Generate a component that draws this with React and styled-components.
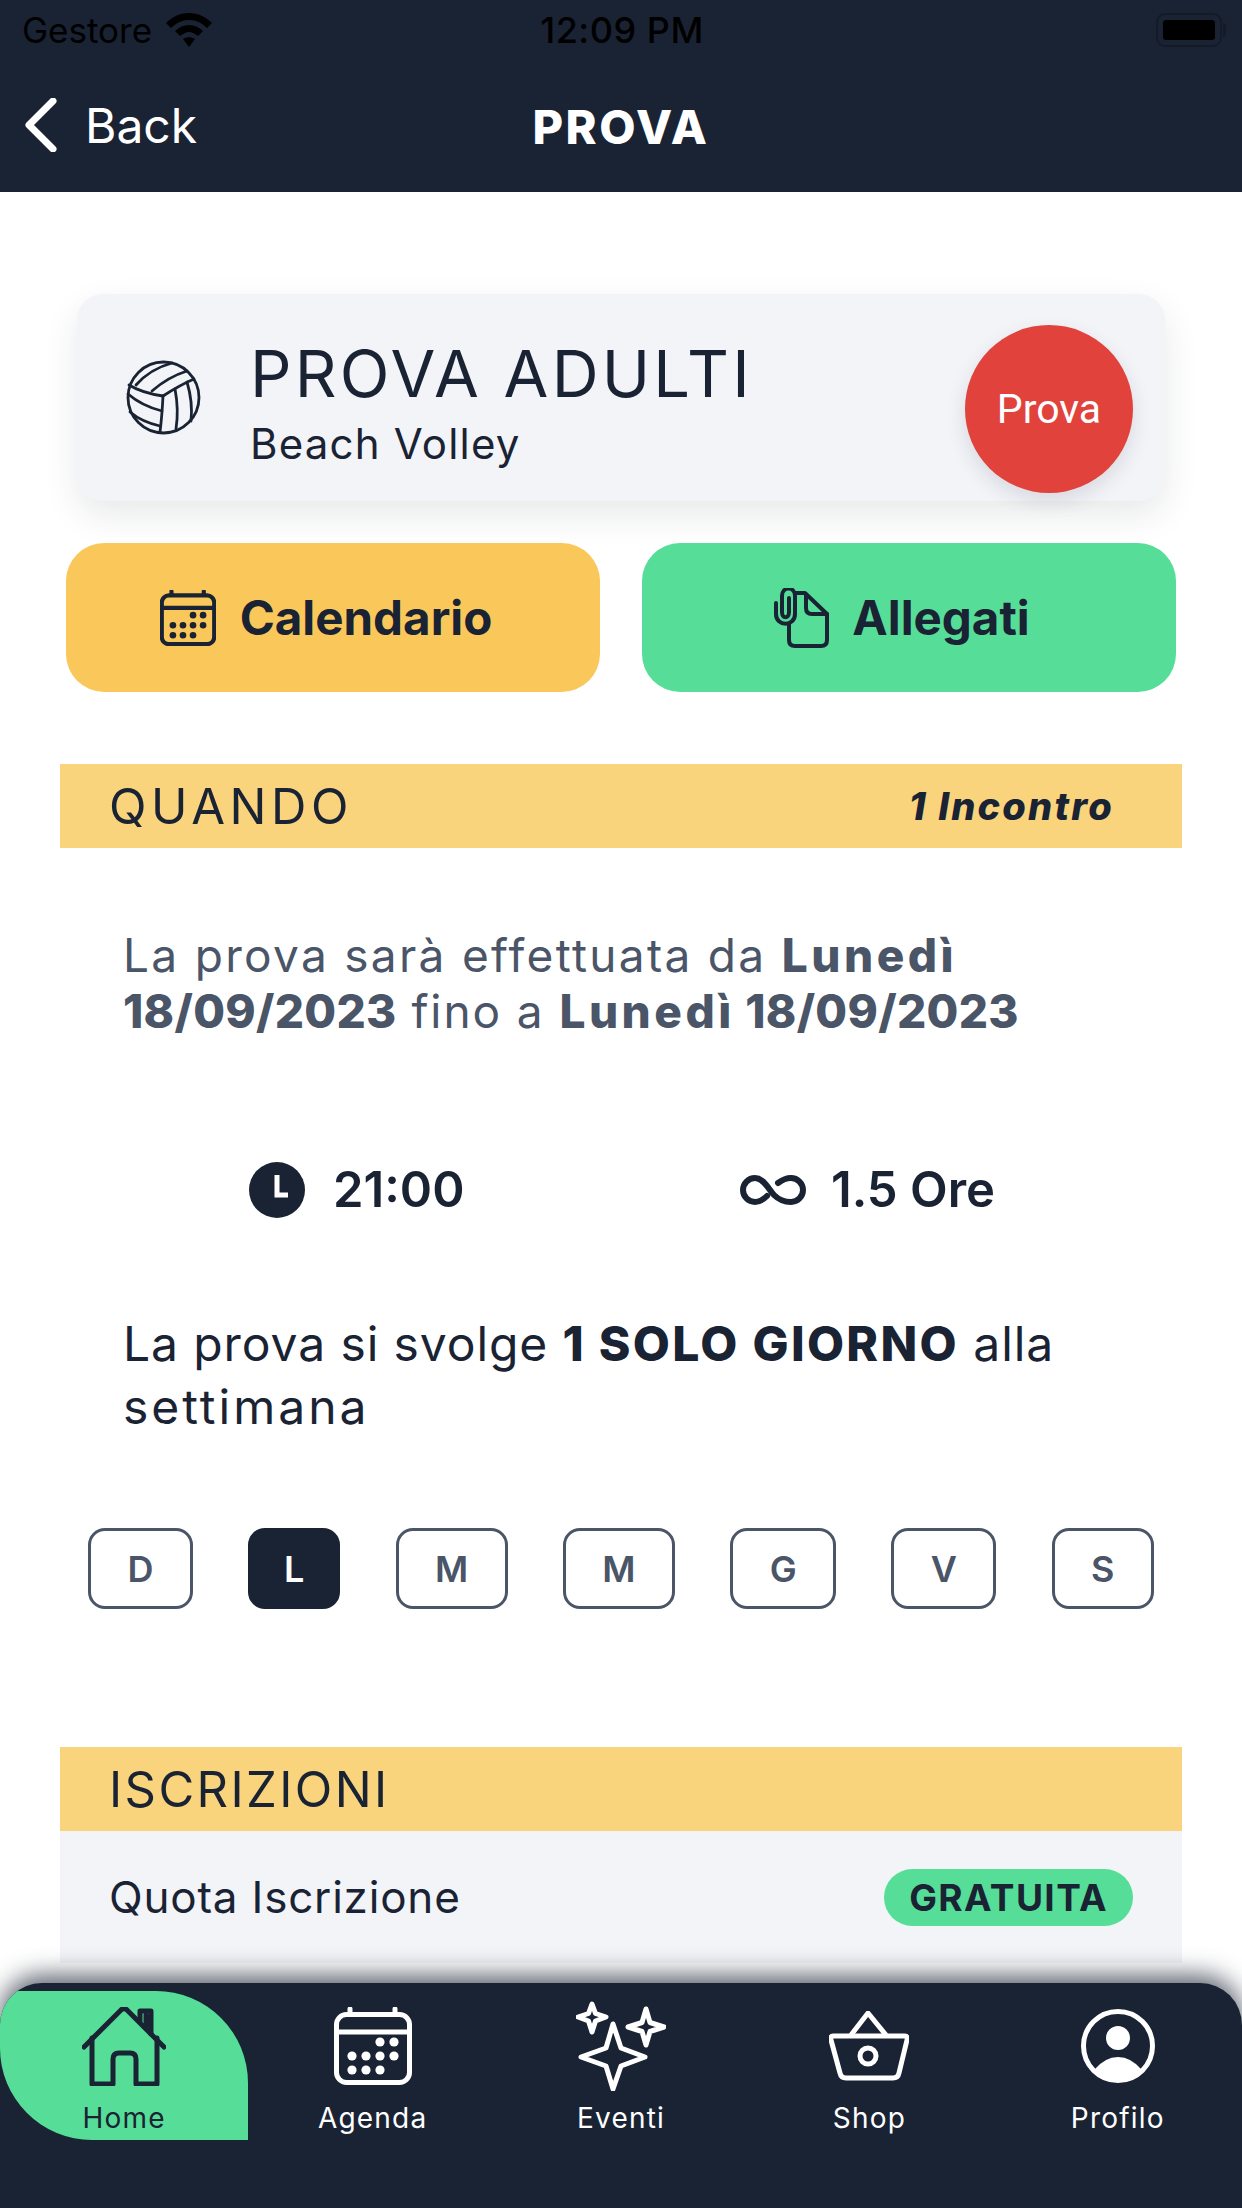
import { styled, createGlobalStyle } from 'styled-components';

const NAVY = '#1a2333';
const SLATE = '#4a5568';
const GREEN = '#56de98';

const GlobalStyle = createGlobalStyle`
  html, body {
    margin: 0;
    padding: 0;
    background: #fff;
    font-family: Inter, "Liberation Sans", sans-serif;
  }
  * {
    box-sizing: border-box;
  }
`;

const Page = styled.div`
  width: 1242px;
  height: 2208px;
  display: flex;
  flex-direction: column;
  overflow: hidden;
  background: #fff;
  color: ${NAVY};
`;

const Header = styled.header`
  height: 192px;
  flex: none;
  background: ${NAVY};
`;

const StatusBar = styled.div`
  height: 60px;
  padding: 0 20px 0 22px;
  display: grid;
  grid-template-columns: 1fr auto 1fr;
  align-items: center;
  color: #000;
  font: 400 35px Inter, sans-serif;
`;

const Carrier = styled.div`
  display: flex;
  align-items: center;
  gap: 14px;
`;

const Clock = styled.div`
  font-size: 36px;
  font-weight: 500;
  letter-spacing: 0.5px;
`;

const Battery = styled.div`
  position: relative;
  justify-self: end;
  width: 66px;
  height: 34px;
  padding: 5px;
  border: 2px solid #141a26;
  border-radius: 9px;

  &::before {
    content: '';
    display: block;
    height: 100%;
    background: #000;
    border-radius: 3px;
  }

  &::after {
    content: '';
    position: absolute;
    top: 8px;
    right: -6px;
    width: 3px;
    height: 14px;
    background: #141a26;
    border-radius: 0 3px 3px 0;
  }
`;

const TopBar = styled.div`
  height: 132px;
  padding: 0 25px;
  display: grid;
  grid-template-columns: 1fr auto 1fr;
  align-items: center;
  color: #fff;
`;

const BackLink = styled.div`
  display: flex;
  align-items: center;
  gap: 28px;
  padding-bottom: 2px;
  font: 400 48px Inter, sans-serif;
`;

const Title = styled.div`
  font: 800 47px Inter, sans-serif;
  letter-spacing: 2.5px;
`;

const Main = styled.main`
  flex: 1;
  min-height: 0;
  overflow: hidden;
  padding: 102px 60px 0;
`;

const Card = styled.div`
  height: 207px;
  margin: 0 17px;
  padding: 0 32px 0 49px;
  display: flex;
  align-items: center;
  background: #f3f4f8;
  border-radius: 26px;
  box-shadow: 0 14px 34px rgba(26, 35, 51, 0.1);
`;

const CardText = styled.div`
  flex: 1;
  margin: 11px 0 0 49px;
`;

const CardTitle = styled.div`
  font: 400 65px/70px Inter, sans-serif;
  letter-spacing: 3.2px;
`;

const CardSubtitle = styled.div`
  margin-top: 11px;
  font: 400 42px/48px Inter, sans-serif;
  letter-spacing: 1.2px;
`;

const Badge = styled.div`
  width: 168px;
  height: 168px;
  margin-top: 22px;
  display: flex;
  align-items: center;
  justify-content: center;
  color: #fff;
  background: #e1423c;
  border-radius: 50%;
  box-shadow: 0 8px 20px rgba(26, 35, 51, 0.12);
  font: 400 41px Roboto, sans-serif;
`;

const Actions = styled.div`
  margin: 42px 6px 0;
  display: grid;
  grid-template-columns: 1fr 1fr;
  gap: 42px;
`;

const ActionButton = styled.div`
  height: 149px;
  padding-right: 14px;
  display: flex;
  align-items: center;
  justify-content: center;
  gap: ${(p) => p.$gap}px;
  background: ${(p) => p.$color};
  border-radius: 38px;
  font: 700 47.5px Inter, sans-serif;
`;

const SectionBar = styled.div`
  height: 84px;
  margin-top: ${(p) => p.$top}px;
  padding: 0 68px 0 49px;
  display: flex;
  align-items: center;
  justify-content: space-between;
  background: #f9d47c;
  font: 400 49px Inter, sans-serif;
  letter-spacing: ${(p) => p.$spacing}px;
`;

const SectionNote = styled.span`
  font: italic 800 38px Inter, sans-serif;
  letter-spacing: 2.2px;
`;

const Paragraph = styled.p`
  margin: ${(p) => p.$top}px 0 0;
  padding-left: 63px;
  color: ${(p) => p.$color};
  font: 400 ${(p) => p.$size}px/${(p) => p.$line}px Inter, sans-serif;
  letter-spacing: 1.9px;

  b {
    font-weight: 800;
    letter-spacing: ${(p) => p.$boldSpacing}px;
  }
`;

const Spaced = styled.span`
  letter-spacing: ${(p) => p.$spacing}px;
`;

const TimeRow = styled.div`
  margin-top: 121px;
  padding: 0 187px 0 189px;
  display: flex;
  align-items: center;
  justify-content: space-between;
`;

const TimeItem = styled.div`
  display: flex;
  align-items: center;
  gap: ${(p) => p.$gap}px;
  font: 600 49px Inter, sans-serif;
`;

const Days = styled.div`
  margin-top: 90px;
  padding: 0 28px;
  display: flex;
  justify-content: space-between;
`;

const Day = styled.div`
  height: 81px;
  padding: 0 ${(p) => (p.$active ? 33 : 36.5)}px;
  display: flex;
  align-items: center;
  color: ${(p) => (p.$active ? '#fff' : SLATE)};
  background: ${(p) => (p.$active ? NAVY : '#fff')};
  border: 3px solid ${(p) => (p.$active ? NAVY : SLATE)};
  border-radius: 17px;
  font: 600 36px Inter, sans-serif;
`;

const FeeRow = styled.div`
  height: 200px;
  padding: 0 49px 68px;
  display: flex;
  align-items: center;
  justify-content: space-between;
  background: #f3f4f8;
  font: 400 44px Inter, sans-serif;
  letter-spacing: 0.8px;
`;

const FeePill = styled.span`
  height: 57px;
  padding: 0 25px;
  display: flex;
  align-items: center;
  background: ${GREEN};
  border-radius: 29px;
  font: 700 37px Inter, sans-serif;
  letter-spacing: 1.4px;
`;

const BottomNav = styled.nav`
  height: 225px;
  flex: none;
  margin-top: 20px;
  padding-top: 8px;
  display: grid;
  grid-template-columns: repeat(5, 1fr);
  align-items: start;
  background: ${NAVY};
  border-radius: 42px 42px 0 0;
  box-shadow: 0 -8px 24px rgba(26, 35, 51, 0.7);
  overflow: hidden;
  position: relative;
  z-index: 1;
`;

const NavItem = styled.div`
  height: 149px;
  display: flex;
  flex-direction: column;
  align-items: center;
  color: ${(p) => (p.$active ? NAVY : '#fff')};
  background: ${(p) => (p.$active ? GREEN : 'transparent')};
  border-radius: 0 92px 0 92px;
`;

const NavIcon = styled.div`
  height: 110px;
  display: flex;
  align-items: center;
`;

const NavLabel = styled.span`
  font: 400 28px/34px Inter, sans-serif;
  letter-spacing: 1.2px;
`;

function VolleyIcon() {
  return (
    <svg width="75" height="75" viewBox="0 0 75 75" fill="none" stroke={NAVY} strokeWidth="2.8" strokeLinecap="round">
      <circle cx="37.5" cy="37.5" r="35.5" />
      <path d="M37 36 Q36 56 34 72" />
      <path d="M37 36 Q16 33 3 25" />
      <path d="M36 51 Q16 46 2 34" />
      <path d="M34 66 Q16 62 4 52" />
      <path d="M37 36 Q54 25 68 19" />
      <path d="M26 31 Q42 17 61 11" />
      <path d="M10 25 Q24 9 46 3" />
      <path d="M49 29 Q53 50 50 69" />
      <path d="M61 22 Q67 42 65 61" />
    </svg>
  );
}

function CalendarIcon({ size, stroke }) {
  const dots = [
    [46, 35], [60, 35],
    [18, 49], [32, 49], [46, 49], [60, 49],
    [18, 63], [32, 63], [46, 63],
  ];
  return (
    <svg width={size} height={size} viewBox="0 0 78 78" fill="none" stroke="currentColor" strokeWidth={stroke} strokeLinecap="round">
      <rect x="2.5" y="7.5" width="73" height="68" rx="10" />
      <path d="M3 25 H75 M16 2 V7 M61 2 V7" />
      {dots.map(([x, y]) => (
        <circle key={`${x}-${y}`} cx={x} cy={y} r="4.6" fill="currentColor" stroke="none" />
      ))}
    </svg>
  );
}

function AttachIcon() {
  return (
    <svg width="56" height="60" viewBox="8 7 56 60" fill="none" stroke={NAVY} strokeWidth="4" strokeLinecap="round" strokeLinejoin="round">
      <path d="M30 12 H39 L61 33 V59 Q61 65 55 65 H29 Q23 65 23 59 V43" />
      <path d="M40 14 V27 Q40 33 46 33 H61" />
      <path d="M10 22 V33 C10 46 29 46 29 33 V15 C29 5 16 5 16 15 V31 C16 38 23 38 23 31 V17" />
    </svg>
  );
}

function ClockIcon() {
  return (
    <svg width="56" height="56" viewBox="0 0 56 56">
      <circle cx="28" cy="28" r="28" fill={NAVY} />
      <path d="M28 13 V33 H39" fill="none" stroke="#fff" strokeWidth="5" />
    </svg>
  );
}

function InfinityIcon() {
  return (
    <svg width="67" height="36" viewBox="9 14 67 36" fill="none" stroke={NAVY} strokeWidth="6" strokeLinecap="round">
      <path d="M36 38 C32 42 28 44 24 44 A12 12 0 0 1 24 20 C33 20 38 32 43 37 C47 41 52 44 60 44 A12 12 0 0 0 60 20 C55 20 51 22 47 25" />
    </svg>
  );
}

function HomeIcon() {
  return (
    <svg width="84" height="79" viewBox="0 0 84 79" fill="none" stroke="currentColor" strokeWidth="5" strokeLinecap="round" strokeLinejoin="round">
      <path d="M2 40 L39 3 Q42 0 45 3 L82 40" />
      <path d="M10 31 V77 H31 V52 Q31 46 37 46 H48 Q54 46 54 52 V77 H75 V31" />
      <path d="M58 14 V4 H69 V27 M64 8 V20" />
    </svg>
  );
}

function SparklesIcon() {
  return (
    <svg width="90" height="90" viewBox="0 0 90 90" fill="none" stroke="#fff" strokeWidth="5" strokeLinejoin="round">
      <path d="M37 23 L45 47 L69 56 L45 65 L37 88 L30 65 L5 56 L30 47 Z" />
      <path d="M16 3 L19.5 12.5 L30 16 L19.5 20 L16 31 L12.5 20 L2 16 L12.5 12.5 Z" />
      <path d="M70 8 L74 21.5 L88 26 L74 30.5 L70 44 L66 30.5 L52 26 L66 21.5 Z" />
    </svg>
  );
}

function BasketIcon() {
  return (
    <svg width="80" height="70" viewBox="0 0 80 70" fill="none" stroke="#fff" strokeWidth="5" strokeLinejoin="round">
      <path d="M4 25 H76 Q79 25 78 29 L70 62 Q69 67 64 67 H17 Q12 67 11 62 L2 29 Q1 25 4 25 Z" />
      <path d="M22 24 L39 2 L57 24" />
      <circle cx="39" cy="45" r="8" />
    </svg>
  );
}

function ProfileIcon() {
  return (
    <svg width="74" height="74" viewBox="0 0 74 74" fill="none" stroke="#fff" strokeWidth="5">
      <circle cx="37" cy="37" r="34.5" />
      <circle cx="37" cy="29" r="12" fill="#fff" stroke="none" />
      <path d="M13 61 Q24 48 37 48 Q50 48 61 61 A34 34 0 0 1 13 61 Z" fill="#fff" stroke="none" />
    </svg>
  );
}

const weekDays = [
  { letter: 'D' },
  { letter: 'L', active: true },
  { letter: 'M' },
  { letter: 'M' },
  { letter: 'G' },
  { letter: 'V' },
  { letter: 'S' },
];

const navItems = [
  { label: 'Home', icon: <HomeIcon />, active: true },
  { label: 'Agenda', icon: <CalendarIcon size={78} stroke={5} /> },
  { label: 'Eventi', icon: <SparklesIcon /> },
  { label: 'Shop', icon: <BasketIcon /> },
  { label: 'Profilo', icon: <ProfileIcon /> },
];

export default function App() {
  return (
    <Page>
      <GlobalStyle />
      <Header>
        <StatusBar>
          <Carrier>
            Gestore
            <svg width="46" height="34" viewBox="0 0 46 34" fill="#000">
              <path d="M23 0 C32 0 40 4 46 10 L41 15 C36 10 30 7 23 7 C16 7 10 10 5 15 L0 10 C6 4 14 0 23 0 Z" />
              <path d="M23 12 C28 12 33 14 37 18 L32 23 C29 21 26 19 23 19 C20 19 17 21 14 23 L9 18 C13 14 18 12 23 12 Z" />
              <path d="M23 24 C25 24 27 25 29 26 L23 34 L17 26 C19 25 21 24 23 24 Z" />
            </svg>
          </Carrier>
          <Clock>12:09 PM</Clock>
          <Battery />
        </StatusBar>
        <TopBar>
          <BackLink>
            <svg width="32" height="54" viewBox="0 0 32 54" fill="none" stroke="#fff" strokeWidth="7" strokeLinecap="round" strokeLinejoin="round">
              <path d="M28 3 L4 27 L28 51" />
            </svg>
            Back
          </BackLink>
          <Title>PROVA</Title>
        </TopBar>
      </Header>
      <Main>
        <Card>
          <VolleyIcon />
          <CardText>
            <CardTitle>PROVA ADULTI</CardTitle>
            <CardSubtitle>Beach Volley</CardSubtitle>
          </CardText>
          <Badge>Prova</Badge>
        </Card>
        <Actions>
          <ActionButton $color="#fac85a" $gap={24}>
            <CalendarIcon size={56} stroke={5.8} />
            Calendario
          </ActionButton>
          <ActionButton $color={GREEN} $gap={22}>
            <AttachIcon />
            Allegati
          </ActionButton>
        </Actions>
        <SectionBar $top={72} $spacing={4.6}>
          QUANDO
          <SectionNote>1 Incontro</SectionNote>
        </SectionBar>
        <Paragraph $top={79} $color={SLATE} $size={46} $line={56} $boldSpacing={0.3}>
          <Spaced $spacing={2.3}>La prova sarà effettuata da </Spaced>
          <b>
            <Spaced $spacing={3.5}>Lunedì</Spaced>
          </b>
          <br />
          <b>18/09/2023</b> fino a{' '}
          <b>
            <Spaced $spacing={3.5}>Lunedì</Spaced> 18/09/2023
          </b>
        </Paragraph>
        <TimeRow>
          <TimeItem $gap={28}>
            <ClockIcon />
            21:00
          </TimeItem>
          <TimeItem $gap={24}>
            <InfinityIcon />
            1.5 Ore
          </TimeItem>
        </TimeRow>
        <Paragraph $top={93} $color={NAVY} $size={48} $line={63} $boldSpacing={2.3}>
          <Spaced $spacing={0.9}>La prova si svolge </Spaced>
          <b>1 SOLO GIORNO</b>
          <Spaced $spacing={0.9}> alla</Spaced>
          <br />
          <Spaced $spacing={3}>settimana</Spaced>
        </Paragraph>
        <Days>
          {weekDays.map((day, i) => (
            <Day key={i} $active={day.active}>
              {day.letter}
            </Day>
          ))}
        </Days>
        <SectionBar $top={138} $spacing={2.4}>
          ISCRIZIONI
        </SectionBar>
        <FeeRow>
          Quota Iscrizione
          <FeePill>GRATUITA</FeePill>
        </FeeRow>
      </Main>
      <BottomNav>
        {navItems.map((item) => (
          <NavItem key={item.label} $active={item.active}>
            <NavIcon>{item.icon}</NavIcon>
            <NavLabel>{item.label}</NavLabel>
          </NavItem>
        ))}
      </BottomNav>
    </Page>
  );
}
